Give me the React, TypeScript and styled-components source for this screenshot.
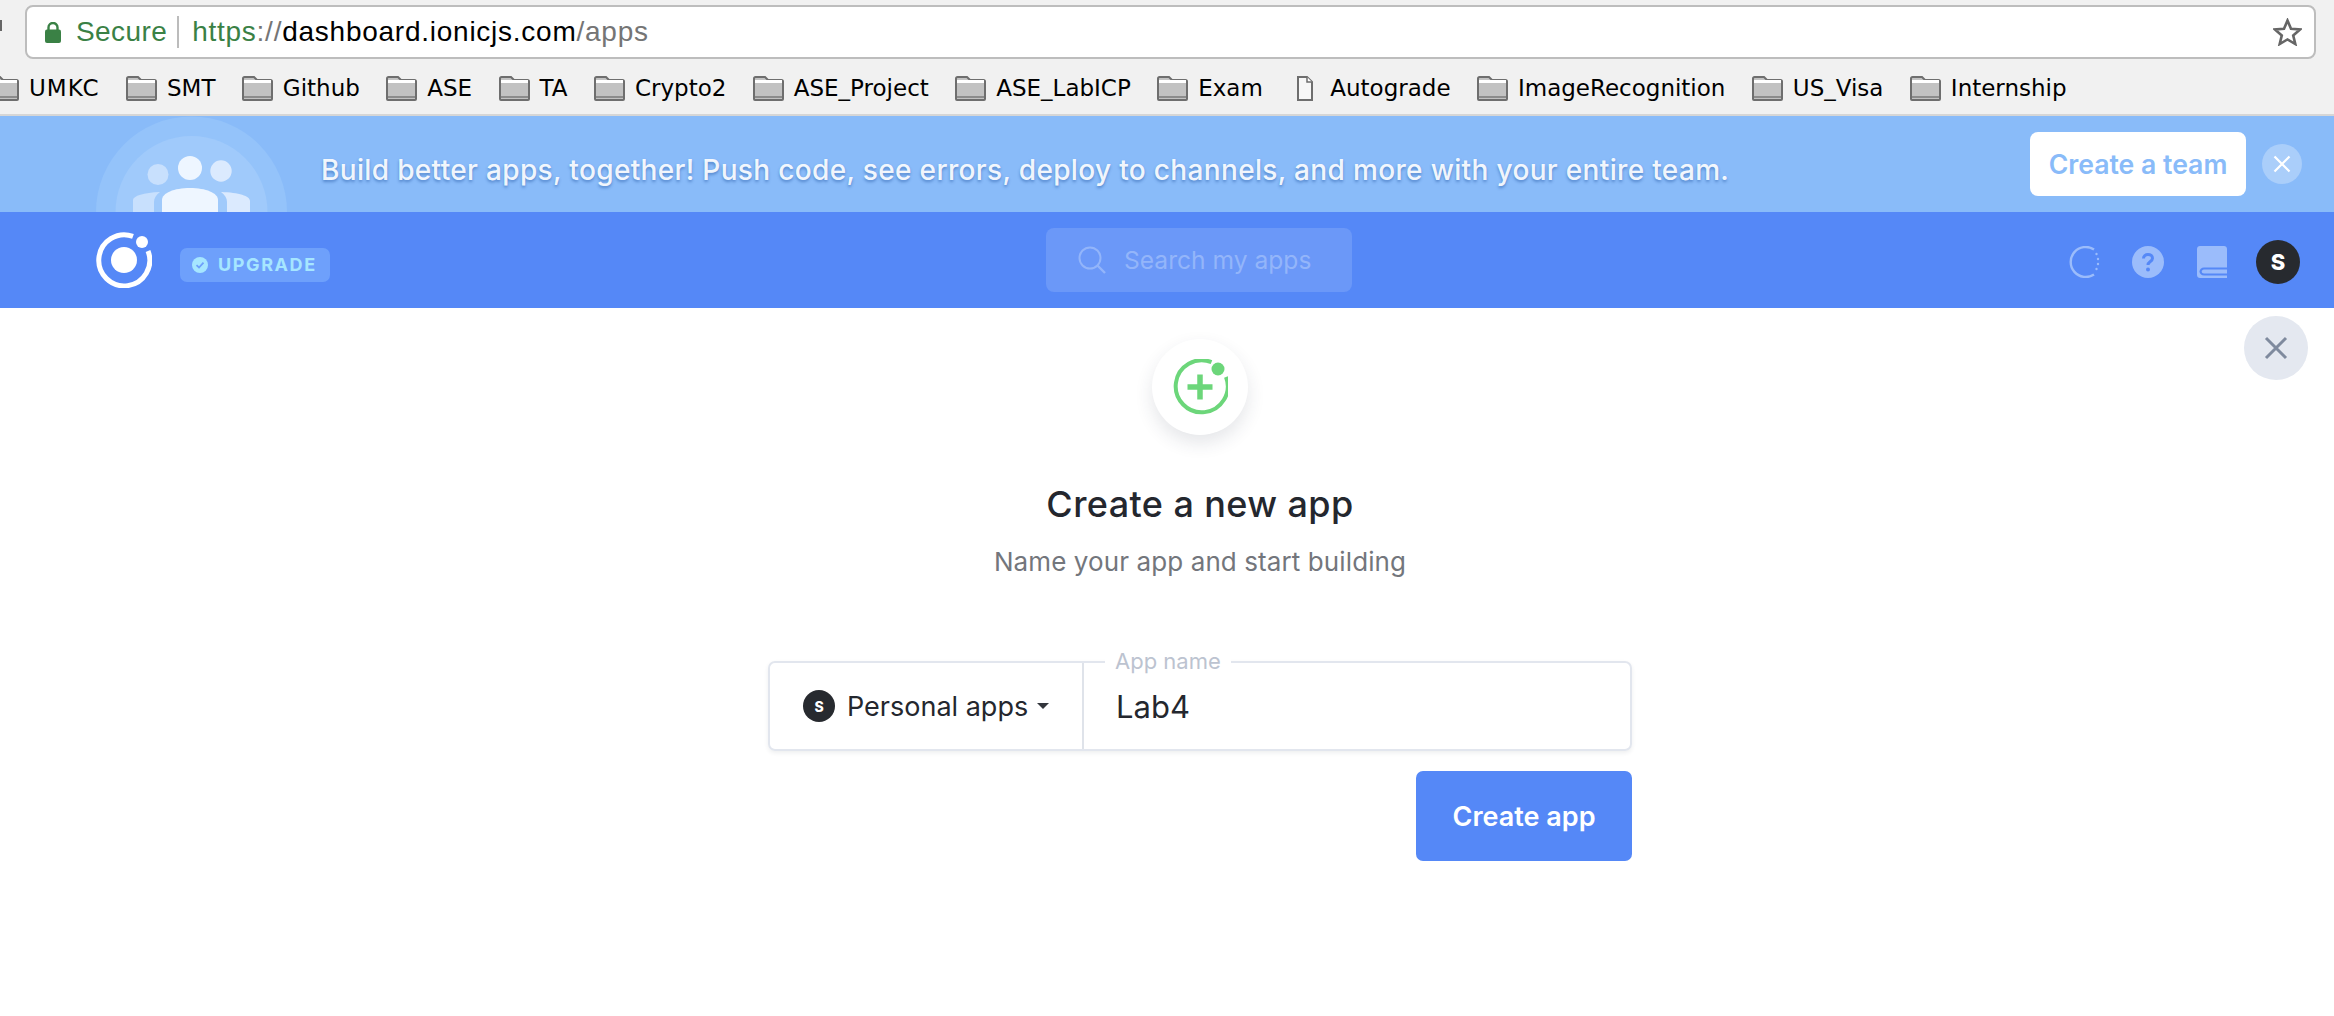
import React from 'react';
import styled, { createGlobalStyle } from 'styled-components';

const Global = createGlobalStyle`
  html, body { margin: 0; padding: 0; background: #fff; }
  body { font-family: "Inter", "Liberation Sans", sans-serif; overflow: hidden; }
  #root { width: 2334px; height: 1016px; overflow: hidden; }
  * { box-sizing: border-box; }
`;

const Page = styled.div`
  position: relative;
  display: flex;
  flex-direction: column;
  width: 2334px;
  height: 1016px;
  background: #fff;
`;

const Chrome = styled.header`
  height: 116px;
  flex: none;
  background: #f1f1f1;
  border-bottom: 2px solid #d6d6d6;
  font-family: "Liberation Sans", Arial, sans-serif;
`;

const AddressRow = styled.div`
  display: flex;
  align-items: flex-start;
  height: 65px;
  padding: 5px 18px 0 0;
`;

const BackStub = styled.div`
  width: 2px;
  height: 11px;
  margin: 15px 23px 0 0;
  background: #666;
`;

const AddressBar = styled.div`
  flex: 1;
  display: flex;
  align-items: center;
  height: 54px;
  padding: 0 12px 0 18px;
  background: #fff;
  border: 2px solid #bdbdbd;
  border-radius: 8px;
  font-size: 28px;
`;

const Secure = styled.span`
  margin-left: 15px;
  color: #3a8145;
  letter-spacing: 0.4px;
`;

const Divider = styled.span`
  width: 2px;
  height: 32px;
  margin: 0 13px 0 10px;
  background: #bcbcbc;
`;

const UrlText = styled.span`
  letter-spacing: 0.75px;
`;

const UrlPart = styled.span<{ $tone: 'green' | 'grey' | 'black' }>`
  color: ${(p) => (p.$tone === 'green' ? '#3a8145' : p.$tone === 'grey' ? '#757575' : '#000')};
`;

const StarSlot = styled.span`
  display: flex;
  margin-left: auto;
`;

const Bookmarks = styled.nav`
  display: flex;
  align-items: center;
  gap: 26.4px;
  height: 46px;
  margin-left: -12px;
  font-family: "DejaVu Sans", "Liberation Sans", sans-serif;
`;

const Bookmark = styled.div<{ $track: number }>`
  display: flex;
  align-items: center;
  gap: 10px;
  font-size: 23px;
  letter-spacing: ${(p) => p.$track}px;
  color: #000;
  white-space: nowrap;
`;

const IconBox = styled.span`
  display: flex;
  justify-content: center;
  width: 31px;
`;

const Banner = styled.section`
  display: flex;
  align-items: center;
  height: 96px;
  flex: none;
  padding: 0 32px 0 96px;
  background: #89bbf9;
`;

const Illustration = styled.svg`
  align-self: flex-end;
  flex: none;
  display: block;
`;

const BannerText = styled.p`
  margin: 12px 0 0 33px;
  color: rgba(255, 255, 255, 0.93);
  font-size: 28px;
  font-weight: 500;
  letter-spacing: 0.34px;
  white-space: nowrap;
  text-shadow: 0 2px 3px rgba(20, 70, 150, 0.45);
`;

const TeamButton = styled.button`
  margin-left: auto;
  width: 216px;
  height: 64px;
  border: 0;
  border-radius: 8px;
  background: #fff;
  color: #89bbf9;
  font-family: inherit;
  font-size: 26.6px;
  font-weight: 600;
`;

const BannerClose = styled.button`
  display: flex;
  align-items: center;
  justify-content: center;
  width: 40px;
  height: 40px;
  margin-left: 16px;
  padding: 0;
  border: 0;
  border-radius: 50%;
  background: rgba(255, 255, 255, 0.28);
`;

const NavBar = styled.div`
  display: flex;
  align-items: center;
  height: 96px;
  flex: none;
  padding: 0 34px 0 96px;
  background: #5588f7;
`;

const Badge = styled.div`
  display: flex;
  align-items: center;
  gap: 10px;
  width: 150px;
  height: 34px;
  margin: 10px 0 0 28px;
  padding: 0 0 1px 12px;
  border-radius: 7px;
  background: #6ea0fb;
  color: #a6e6ff;
  font-size: 18px;
  font-weight: 700;
  letter-spacing: 1.6px;
`;

const Search = styled.div`
  display: flex;
  align-items: center;
  gap: 18px;
  width: 306px;
  height: 64px;
  margin-left: 716px;
  padding: 0 0 1px 32px;
  border-radius: 8px;
  background: #6b98f8;
  color: #93b5fa;
  font-size: 24.6px;
`;

const NavTools = styled.div`
  display: flex;
  align-items: center;
  margin: 4px 0 0 auto;
`;

const ToolSlot = styled.span<{ $gap: number }>`
  display: flex;
  margin-right: ${(p) => p.$gap}px;
`;

const Avatar = styled.div<{ $size: number; $font: number }>`
  display: flex;
  align-items: center;
  justify-content: center;
  flex: none;
  width: ${(p) => p.$size}px;
  height: ${(p) => p.$size}px;
  border-radius: 50%;
  background: #272a2f;
  color: #fff;
  font-size: ${(p) => p.$font}px;
  font-weight: 800;
`;

const Dismiss = styled.button`
  position: absolute;
  top: 316px;
  right: 26px;
  display: flex;
  align-items: center;
  justify-content: center;
  width: 64px;
  height: 64px;
  padding: 0;
  border: 0;
  border-radius: 50%;
  background: #e4e8f0;
`;

const Main = styled.main`
  display: flex;
  flex-direction: column;
  align-items: center;
  padding: 31px 0 0 66px;
`;

const IconDisc = styled.div`
  display: flex;
  align-items: center;
  justify-content: center;
  width: 96px;
  height: 96px;
  border-radius: 50%;
  background: #fff;
  box-shadow: 0 8px 18px rgba(40, 50, 70, 0.12);
`;

const Title = styled.h1`
  margin: 47px 0 0;
  color: #24272e;
  font-size: 36px;
  line-height: 44px;
  font-weight: 500;
  letter-spacing: 0.4px;
`;

const Subtitle = styled.p`
  margin: 20px 0 0;
  color: #73767c;
  font-size: 26px;
  line-height: 32px;
  font-weight: 400;
  letter-spacing: 0.1px;
`;

const Form = styled.form`
  display: flex;
  flex-direction: column;
  align-items: flex-end;
  width: 864px;
  margin-top: 83px;
`;

const FieldGroup = styled.div`
  position: relative;
  display: flex;
  width: 100%;
  height: 90px;
  border: 2px solid #e2e6ee;
  border-radius: 7px;
  box-shadow: 0 2px 4px rgba(40, 50, 70, 0.08);
`;

const OrgSelect = styled.div`
  display: flex;
  align-items: center;
  gap: 12px;
  width: 314px;
  padding-left: 33px;
  border-right: 2px solid #dfe3ea;
  color: #24272e;
  font-size: 27px;
`;

const Caret = styled.span`
  width: 0;
  height: 0;
  margin-left: -3px;
  border-left: 6px solid transparent;
  border-right: 6px solid transparent;
  border-top: 6px solid #33363c;
`;

const NameValue = styled.div`
  display: flex;
  align-items: center;
  padding-left: 32px;
  color: #24272e;
  font-size: 31px;
`;

const FloatLabel = styled.span`
  position: absolute;
  top: -17px;
  left: 335px;
  padding: 0 10px;
  background: #fff;
  color: #bcc3d0;
  font-size: 22px;
  line-height: 30px;
`;

const Submit = styled.button`
  width: 216px;
  height: 90px;
  margin-top: 20px;
  border: 0;
  border-radius: 7px;
  background: #5588f7;
  color: #fff;
  font-family: inherit;
  font-size: 27px;
  font-weight: 600;
`;

const FolderIcon = () => (
  <svg width="31" height="25" viewBox="0 0 31 25">
    <path d="M1 23V2.5C1 1.6 1.6 1 2.5 1H12L15 4H28.5C29.4 4 30 4.6 30 5.5V23C30 23.6 29.6 24 29 24H2C1.4 24 1 23.6 1 23Z" fill="#c2c2c2" stroke="#6e6e6e" strokeWidth="2" />
    <path d="M2 5.5H29" stroke="#fff" strokeWidth="3" />
    <path d="M2 21H29" stroke="#8c8c8c" strokeWidth="2" />
  </svg>
);

const FileIcon = () => (
  <svg width="16" height="25" viewBox="0 0 16 25">
    <path d="M1 1H10L15 6V24H1Z" fill="#f7f7f7" stroke="#6e6e6e" strokeWidth="2" />
    <path d="M10 1V6H15" fill="#fff" stroke="#6e6e6e" strokeWidth="1.5" />
  </svg>
);

const LockIcon = () => (
  <svg width="16" height="21" viewBox="0 0 16 21">
    <path d="M3.5 8V5.5a4.5 4.5 0 0 1 9 0V8" fill="none" stroke="#3a8145" strokeWidth="2.4" />
    <rect x="0" y="7.5" width="16" height="13.5" rx="2" fill="#3a8145" />
  </svg>
);

const StarIcon = () => (
  <svg width="29" height="28" viewBox="0 0 29 28">
    <path d="M14.5 2.5L18 10.8L27 11.5L20.2 17.4L22.3 26L14.5 21.4L6.7 26L8.8 17.4L2 11.5L11 10.8Z" fill="none" stroke="#666" strokeWidth="2.6" strokeLinejoin="miter" />
  </svg>
);

const TeamArt = () => (
  <Illustration width="192" height="96" viewBox="0 0 192 96">
    <circle cx="95.5" cy="96" r="95.5" fill="#94c3fa" />
    <circle cx="95.5" cy="96" r="76" fill="#a0caFb" />
    <circle cx="94" cy="52" r="12" fill="#eef6ff" />
    <circle cx="62" cy="58.5" r="10.5" fill="#c8e0fd" />
    <circle cx="125" cy="55" r="10.7" fill="#dbeafe" />
    <path d="M37 96V84C37 80 48 76.5 64 76C60 79 58 82 58 86V96Z" fill="#c8e0fd" />
    <path d="M154 96V85C154 80 143 76.5 125 76C129 79 131 82 131 86V96Z" fill="#dbeafe" />
    <path d="M66 96V84C66 77 78 72 94 72C110 72 122 77 122 84V96Z" fill="#eef6ff" />
  </Illustration>
);

const IonicLogo = () => (
  <svg width="56" height="56" viewBox="0 0 56 56">
    <path d="M37 4.4A25.5 25.5 0 1 0 52 19" fill="none" stroke="#fff" strokeWidth="5" />
    <circle cx="46" cy="10" r="6" fill="#fff" />
    <circle cx="28" cy="28" r="13" fill="#fff" />
  </svg>
);

const CheckBadge = () => (
  <svg width="16" height="16" viewBox="0 0 16 16">
    <circle cx="8" cy="8" r="8" fill="#a6e6ff" />
    <path d="M4.5 8.2L7 10.5L11.5 5.6" fill="none" stroke="#6ea0fb" strokeWidth="1.8" />
  </svg>
);

const SearchIcon = () => (
  <svg width="28" height="28" viewBox="0 0 28 28">
    <circle cx="12" cy="12" r="10.5" fill="none" stroke="#93b5fa" strokeWidth="2" />
    <path d="M19.5 19.5L27 27" stroke="#93b5fa" strokeWidth="2.4" />
  </svg>
);

const SpinnerIcon = () => (
  <svg width="32" height="32" viewBox="0 0 32 32">
    <path d="M26 3.5A15 15 0 1 0 26 28.5" fill="none" stroke="#9bbcfb" strokeWidth="2.4" />
    <g fill="#9bbcfb">
      <circle cx="28.5" cy="8" r="1.2" />
      <circle cx="30" cy="13" r="1.2" />
      <circle cx="30" cy="18" r="1.2" />
      <circle cx="28.5" cy="23" r="1.2" />
    </g>
  </svg>
);

const HelpIcon = () => (
  <svg width="32" height="32" viewBox="0 0 32 32">
    <circle cx="16" cy="16" r="16" fill="#9bbcfb" />
    <path d="M11.5 12.5C11.5 10 13.5 8.5 16 8.5C18.5 8.5 20.5 10 20.5 12.3C20.5 15.5 16 15.5 16 19" fill="none" stroke="#5588f7" strokeWidth="3" />
    <circle cx="16" cy="23.5" r="2" fill="#5588f7" />
  </svg>
);

const BookIcon = () => (
  <svg width="30" height="32" viewBox="0 0 30 32">
    <path d="M3 0H27C28.7 0 30 1.3 30 3V32H3C1.3 32 0 30.7 0 29V3C0 1.3 1.3 0 3 0Z" fill="#9bbcfb" />
    <path d="M30 21.5H7C4.5 21.5 2.5 23.5 2.5 25.5C2.5 27.5 4.5 29.5 7 29.5H30Z" fill="#5588f7" />
    <path d="M30 23.5H7C5.6 23.5 4.7 24.5 4.7 25.5C4.7 26.5 5.6 27.5 7 27.5H30Z" fill="#9bbcfb" />
  </svg>
);

const CrossIcon = ({ size, color, weight }: { size: number; color: string; weight: number }) => (
  <svg width={size} height={size} viewBox="0 0 24 24">
    <path d="M2 2L22 22M22 2L2 22" stroke={color} strokeWidth={weight} fill="none" />
  </svg>
);

const NewAppIcon = () => (
  <svg width="56" height="56" viewBox="0 0 56 56">
    <path d="M39.5 3.2A26 26 0 1 0 54 18" fill="none" stroke="#6cd67a" strokeWidth="4" />
    <circle cx="46" cy="10" r="6.5" fill="#6cd67a" />
    <path d="M15.5 28H40.5M28 15.5V40.5" stroke="#6cd67a" strokeWidth="5.5" />
  </svg>
);

const marks: { name: string; file?: boolean; track?: number }[] = [
  { name: 'UMKC', track: 1 }, { name: 'SMT' }, { name: 'Github' }, { name: 'ASE' }, { name: 'TA' },
  { name: 'Crypto2' }, { name: 'ASE_Project' }, { name: 'ASE_LabICP' }, { name: 'Exam' },
  { name: 'Autograde', file: true }, { name: 'ImageRecognition' }, { name: 'US_Visa' }, { name: 'Internship' },
];

export default function App() {
  return (
    <Page>
      <Global />
      <Chrome>
        <AddressRow>
          <BackStub />
          <AddressBar>
            <LockIcon />
            <Secure>Secure</Secure>
            <Divider />
            <UrlText>
              <UrlPart $tone="green">https</UrlPart>
              <UrlPart $tone="grey">://</UrlPart>
              <UrlPart $tone="black">dashboard.ionicjs.com</UrlPart>
              <UrlPart $tone="grey">/apps</UrlPart>
            </UrlText>
            <StarSlot><StarIcon /></StarSlot>
          </AddressBar>
        </AddressRow>
        <Bookmarks>
          {marks.map((m) => (
            <Bookmark key={m.name} $track={m.track ?? 0}>
              <IconBox>{m.file ? <FileIcon /> : <FolderIcon />}</IconBox>
              {m.name}
            </Bookmark>
          ))}
        </Bookmarks>
      </Chrome>

      <Banner>
        <TeamArt />
        <BannerText>Build better apps, together! Push code, see errors, deploy to channels, and more with your entire team.</BannerText>
        <TeamButton>Create a team</TeamButton>
        <BannerClose><CrossIcon size={18} color="#fff" weight={3} /></BannerClose>
      </Banner>

      <NavBar>
        <IonicLogo />
        <Badge><CheckBadge />UPGRADE</Badge>
        <Search><SearchIcon />Search my apps</Search>
        <NavTools>
          <ToolSlot $gap={32}><SpinnerIcon /></ToolSlot>
          <ToolSlot $gap={33}><HelpIcon /></ToolSlot>
          <ToolSlot $gap={29}><BookIcon /></ToolSlot>
          <Avatar $size={44} $font={22}>S</Avatar>
        </NavTools>
      </NavBar>

      <Dismiss><CrossIcon size={24} color="#7f8a9e" weight={3} /></Dismiss>

      <Main>
        <IconDisc><NewAppIcon /></IconDisc>
        <Title>Create a new app</Title>
        <Subtitle>Name your app and start building</Subtitle>
        <Form>
          <FieldGroup>
            <OrgSelect>
              <Avatar $size={32} $font={14}>S</Avatar>
              Personal apps
              <Caret />
            </OrgSelect>
            <NameValue>Lab4</NameValue>
            <FloatLabel>App name</FloatLabel>
          </FieldGroup>
          <Submit type="button">Create app</Submit>
        </Form>
      </Main>
    </Page>
  );
}
